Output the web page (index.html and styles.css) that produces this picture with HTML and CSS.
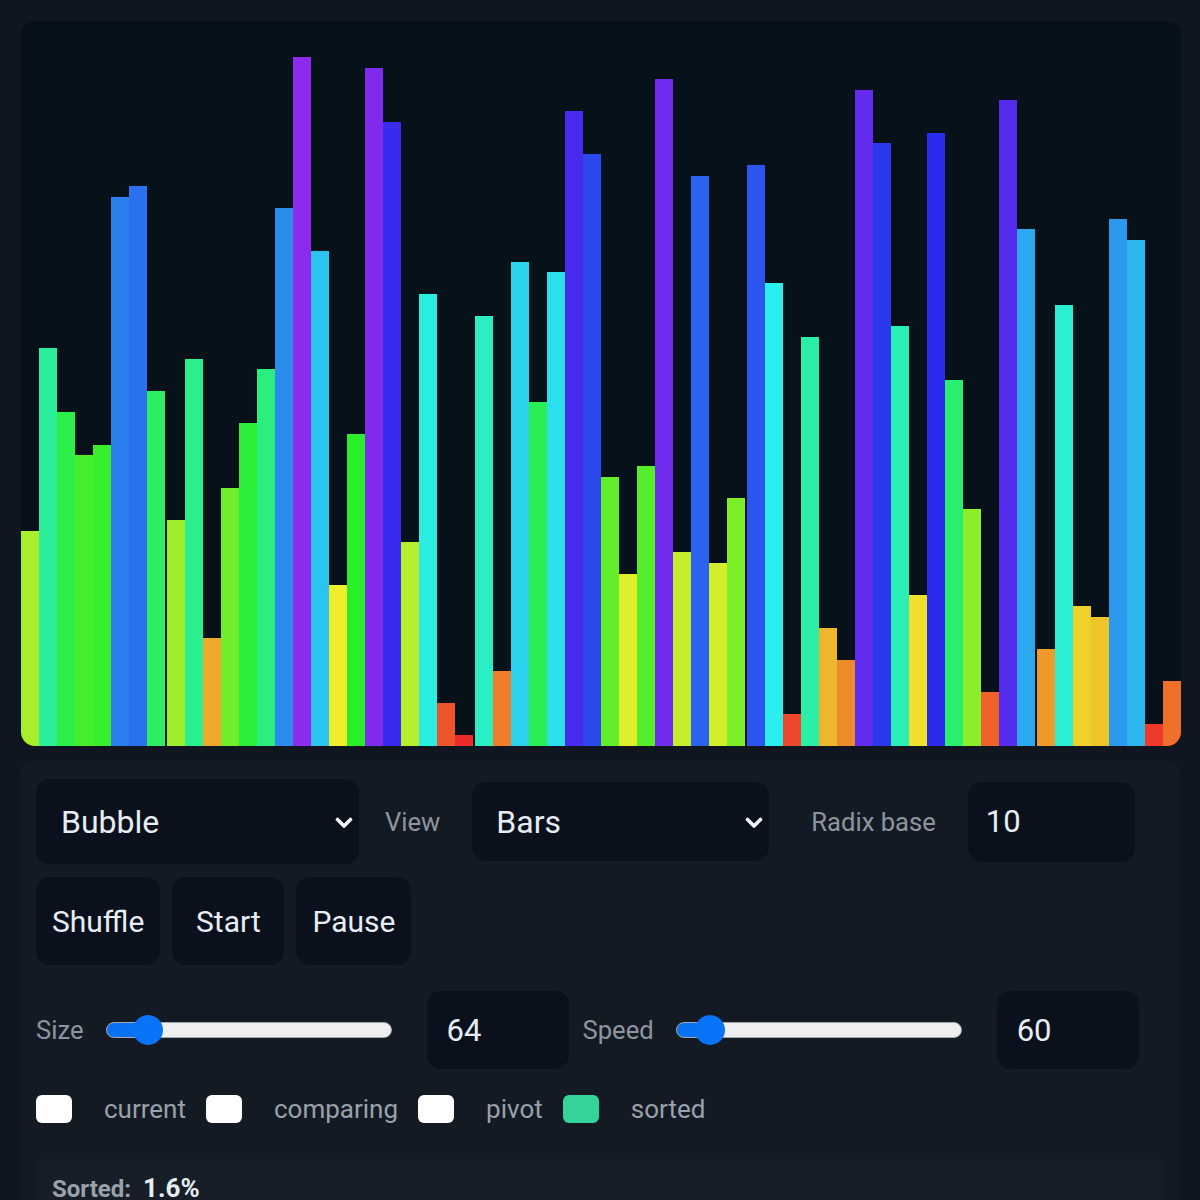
FILE: index.html
```html
<!DOCTYPE html>
<html lang="en">
<head>
<meta charset="utf-8">
<title>Sorting Visualizer</title>
<link rel="stylesheet" href="styles.css">
</head>
<body>
<main class="app">
  <section class="chart">
    <div class="bar" style="--v:20"></div>
    <div class="bar" style="--v:37"></div>
    <div class="bar" style="--v:31"></div>
    <div class="bar" style="--v:27"></div>
    <div class="bar" style="--v:28"></div>
    <div class="bar" style="--v:51"></div>
    <div class="bar" style="--v:52"></div>
    <div class="bar" style="--v:33"></div>
    <div class="bar seam" style="--v:21"></div>
    <div class="bar" style="--v:36"></div>
    <div class="bar" style="--v:10"></div>
    <div class="bar" style="--v:24"></div>
    <div class="bar" style="--v:30"></div>
    <div class="bar" style="--v:35"></div>
    <div class="bar" style="--v:50"></div>
    <div class="bar" style="--v:64"></div>
    <div class="bar" style="--v:46"></div>
    <div class="bar" style="--v:15"></div>
    <div class="bar" style="--v:29"></div>
    <div class="bar" style="--v:63"></div>
    <div class="bar" style="--v:58"></div>
    <div class="bar" style="--v:19"></div>
    <div class="bar" style="--v:42"></div>
    <div class="bar" style="--v:4"></div>
    <div class="bar" style="--v:1"></div>
    <div class="bar seam" style="--v:40"></div>
    <div class="bar" style="--v:7"></div>
    <div class="bar" style="--v:45"></div>
    <div class="bar" style="--v:32"></div>
    <div class="bar" style="--v:44"></div>
    <div class="bar" style="--v:59"></div>
    <div class="bar" style="--v:55"></div>
    <div class="bar" style="--v:25"></div>
    <div class="bar" style="--v:16"></div>
    <div class="bar" style="--v:26"></div>
    <div class="bar" style="--v:62"></div>
    <div class="bar" style="--v:18"></div>
    <div class="bar" style="--v:53"></div>
    <div class="bar" style="--v:17"></div>
    <div class="bar" style="--v:23"></div>
    <div class="bar seam" style="--v:54"></div>
    <div class="bar" style="--v:43"></div>
    <div class="bar" style="--v:3"></div>
    <div class="bar" style="--v:38"></div>
    <div class="bar" style="--v:11"></div>
    <div class="bar" style="--v:8"></div>
    <div class="bar" style="--v:61"></div>
    <div class="bar" style="--v:56"></div>
    <div class="bar" style="--v:39"></div>
    <div class="bar" style="--v:14"></div>
    <div class="bar" style="--v:57"></div>
    <div class="bar" style="--v:34"></div>
    <div class="bar" style="--v:22"></div>
    <div class="bar" style="--v:5"></div>
    <div class="bar" style="--v:60"></div>
    <div class="bar" style="--v:48"></div>
    <div class="bar seam" style="--v:9"></div>
    <div class="bar" style="--v:41"></div>
    <div class="bar" style="--v:13"></div>
    <div class="bar" style="--v:12"></div>
    <div class="bar" style="--v:49"></div>
    <div class="bar" style="--v:47"></div>
    <div class="bar" style="--v:2"></div>
    <div class="bar" style="--v:6"></div>
  </section>

  <section class="panel">
    <div class="row row-top">
      <div class="select select-algo">
        <select aria-label="Algorithm"><option>Bubble</option></select>
        <svg class="chevron" viewBox="0 0 18 12" width="18" height="12" aria-hidden="true"><polyline points="2.5,2.5 9,9 15.5,2.5"/></svg>
      </div>
      <label class="label label-view" for="view">View</label>
      <div class="select select-view">
        <select id="view"><option>Bars</option></select>
        <svg class="chevron" viewBox="0 0 18 12" width="18" height="12" aria-hidden="true"><polyline points="2.5,2.5 9,9 15.5,2.5"/></svg>
      </div>
      <label class="label label-radix" for="radix">Radix base</label>
      <input class="num num-radix" id="radix" type="number" value="10">
    </div>

    <div class="row row-buttons">
      <button class="btn">Shuffle</button>
      <button class="btn">Start</button>
      <button class="btn">Pause</button>
    </div>

    <div class="row row-sliders">
      <label class="label" for="size">Size</label>
      <input class="range" id="size" type="range" min="4" max="572" value="64" style="--p:14.7%">
      <input class="num num-slider" type="number" value="64" aria-label="Size value">
      <label class="label label-speed" for="speed">Speed</label>
      <input class="range" id="speed" type="range" min="1" max="800" value="60" style="--p:11.9%">
      <input class="num num-slider" type="number" value="60" aria-label="Speed value">
    </div>

    <div class="row legend">
      <div class="legend-item"><span class="swatch"></span><span class="legend-text">current</span></div>
      <div class="legend-item"><span class="swatch"></span><span class="legend-text">comparing</span></div>
      <div class="legend-item"><span class="swatch"></span><span class="legend-text">pivot</span></div>
      <div class="legend-item"><span class="swatch swatch-sorted"></span><span class="legend-text">sorted</span></div>
    </div>

    <div class="status">
      <span class="status-label">Sorted:</span>
      <span class="status-value">1.6%</span>
    </div>
  </section>
</main>
</body>
</html>
```

FILE: styles.css
```css
* {
  box-sizing: border-box;
}

html, body {
  margin: 0;
  background: #10161f;
}

body {
  font-family: Roboto, "Liberation Sans", Arial, sans-serif;
  color: #e6edf3;
}

.app {
  width: 1200px;
  padding: 21px 20px 0 21px;
}

/* ---------- chart ---------- */
.chart {
  width: 1160px;
  height: 725px;
  display: flex;
  align-items: flex-end;
  background: #06111a;
  border-radius: 14px;
  overflow: hidden;
}

.bar {
  flex: 0 0 18px;
  width: 18px;
  height: calc(var(--v) / 64 * 95%);
  background: hsl(calc((var(--v) - 1) * 4.2857) 85% 55%);
}

.bar.seam {
  margin-left: 2px;
}

/* ---------- panel ---------- */
.panel {
  width: 1160px;
  margin-top: 14px;
  margin-left: -1px;
  padding: 19px 16px 40px;
  background: #141a23;
  border-radius: 14px;
}

.row {
  display: flex;
  align-items: center;
}

.label {
  font-size: 25.6px;
  color: #8e959e;
  white-space: nowrap;
}

.select {
  position: relative;
  display: flex;
  align-items: center;
}

.select select {
  appearance: none;
  -webkit-appearance: none;
  width: 100%;
  height: 100%;
  border: 0;
  margin: 0;
  padding: 0 0 0 25px;
  border-radius: 14px;
  background: #0b111c;
  color: #e6edf3;
  font-family: inherit;
  font-size: 32px;
  outline: none;
}

.chevron {
  position: absolute;
  right: 6px;
  top: 50%;
  margin-top: -5px;
  fill: none;
  stroke: #f1f5f9;
  stroke-width: 3.6;
  stroke-linecap: round;
  stroke-linejoin: round;
  pointer-events: none;
}

.select-algo {
  width: 323px;
  height: 85px;
}

.label-view {
  margin-left: 26px;
}

.select-view {
  width: 297px;
  height: 79px;
  margin-left: 32px;
}

.select-view select {
  padding-left: 24px;
}

.label-radix {
  margin-left: 42px;
}

.num {
  appearance: textfield;
  -moz-appearance: textfield;
  border: 0;
  margin: 0;
  border-radius: 14px;
  background: #0b111c;
  color: #e6edf3;
  font-family: inherit;
  font-size: 31px;
  padding: 0 0 0 18px;
  outline: none;
}

.num::-webkit-inner-spin-button,
.num::-webkit-outer-spin-button {
  -webkit-appearance: none;
  margin: 0;
}

.num-radix {
  width: 167px;
  height: 80px;
  margin-left: 32px;
}

/* ---------- buttons ---------- */
.row-buttons {
  margin-top: 13px;
  gap: 12px;
}

.btn {
  height: 88px;
  min-width: 112px;
  padding: 0 16px;
  border: 0;
  border-radius: 14px;
  background: #0b111c;
  color: #e6edf3;
  font-family: inherit;
  font-size: 30px;
}

/* ---------- sliders ---------- */
.row-sliders {
  margin-top: 26px;
  height: 78px;
}

.range {
  -webkit-appearance: none;
  appearance: none;
  width: 286px;
  height: 30px;
  margin: 0 0 0 22px;
  padding: 0;
  background: transparent;
}

.range::-webkit-slider-runnable-track {
  height: 16px;
  border: 1px solid #a3a8ae;
  border-radius: 8px;
  background: linear-gradient(to right, #0a72f2 var(--p), #eeeff0 var(--p));
}

.range::-webkit-slider-thumb {
  -webkit-appearance: none;
  width: 30px;
  height: 30px;
  margin-top: -8px;
  border: 0;
  border-radius: 50%;
  background: #0a74f8;
}

.num-slider {
  width: 142px;
  height: 78px;
  margin-left: 35px;
  padding-left: 20px;
}

.label-speed {
  margin-left: 14px;
}

/* ---------- legend ---------- */
.legend {
  margin-top: 25px;
  gap: 20px;
}

.legend-item {
  display: flex;
  align-items: center;
}

.swatch {
  width: 36px;
  height: 28px;
  border-radius: 6px;
  background: #ffffff;
}

.swatch-sorted {
  background: #34d399;
}

.legend-text {
  margin-left: 32px;
  font-size: 26px;
  color: #9aa1aa;
}

/* ---------- status ---------- */
.status {
  margin-top: 35px;
  padding: 14px 16px;
  background: #171e28;
  border-radius: 10px;
  font-size: 24px;
  font-weight: 700;
  display: flex;
  align-items: baseline;
  gap: 12px;
}

.status-label {
  color: #9aa1aa;
}

.status-value {
  color: #e6edf3;
  font-size: 26px;
}
```
